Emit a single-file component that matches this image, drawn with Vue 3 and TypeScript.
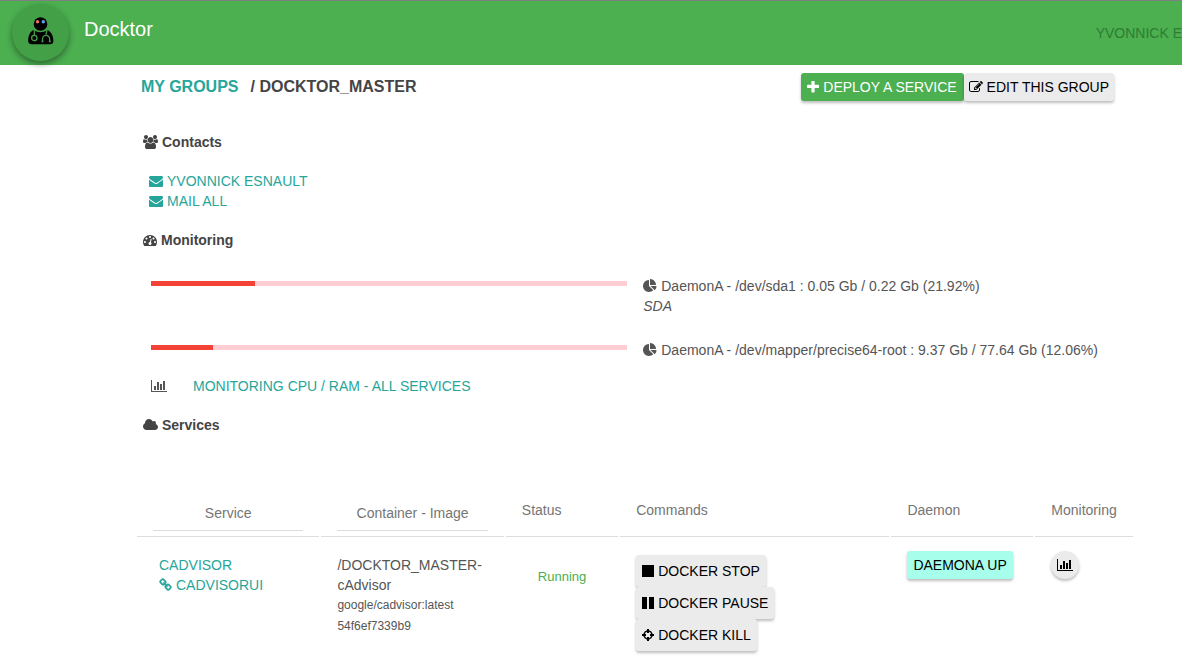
<script setup lang="ts">
interface Icon {
  box: string
  d: string
}

const icons: Record<string, Icon> = {
  plus: {
    box: '192 192 1408 1408',
    d: 'M1600 736v192q0 40-28 68t-68 28h-416v416q0 40-28 68t-68 28h-192q-40 0-68-28t-28-68v-416h-416q-40 0-68-28t-28-68v-192q0-40 28-68t68-28h416v-416q0-40 28-68t68-28h192q40 0 68 28t28 68v416h416q40 0 68 28t28 68z',
  },
  edit: {
    box: '0 0 1792 1792',
    d: 'M888 1184l116-116-152-152-116 116v56h96v96h56zm440-720q-16-16-33 1l-350 350q-17 17-1 33t33-1l350-350q17-17 1-33zm80 594v190q0 119-84.5 203.5t-203.5 84.5h-832q-119 0-203.5-84.5t-84.5-203.5v-832q0-119 84.5-203.5t203.5-84.5h832q63 0 117 25 15 7 18 23 3 17-9 29l-49 49q-14 14-32 8-23-6-45-6h-832q-66 0-113 47t-47 113v832q0 66 47 113t113 47h832q66 0 113-47t47-113v-126q0-13 9-22l64-64q15-15 35-7t20 29zm-96-738l288 288-672 672h-288v-288zm444 132l-92 92-288-288 92-92q28-28 68-28t68 28l152 152q28 28 28 68t-28 68z',
  },
  users: {
    box: '0 0 1920 1792',
    d: 'M593 896q-162 5-265 128h-134q-82 0-138-40.5t-56-118.5q0-353 124-353 6 0 43.5 21t97.5 42.5 119 21.5q67 0 133-23-5 37-5 66 0 139 81 256zm1071 637q0 120-73 189.5t-194 69.5h-874q-121 0-194-69.5t-73-189.5q0-53 3.5-103.5t14-109 26.5-108.5 43-97.5 62-81 85.5-53.5 111.5-20q10 0 43 21.5t73 48 107 48 135 21.5 135-21.5 107-48 73-48 43-21.5q61 0 111.5 20t85.5 53.5 62 81 43 97.5 26.5 108.5 14 109 3.5 103.5zm-1024-1277q0 106-75 181t-181 75-181-75-75-181 75-181 181-75 181 75 75 181zm704 384q0 159-112.5 271.5t-271.5 112.5-271.5-112.5-112.5-271.5 112.5-271.5 271.5-112.5 271.5 112.5 112.5 271.5zm576 225q0 78-56 118.5t-138 40.5h-134q-103-123-265-128 81-117 81-256 0-29-5-66 66 23 133 23 59 0 119-21.5t97.5-42.5 43.5-21q124 0 124 353zm-128-609q0 106-75 181t-181 75-181-75-75-181 75-181 181-75 181 75 75 181z',
  },
  envelope: {
    box: '0 0 1792 1792',
    d: 'M1792 710v794q0 66-47 113t-113 47h-1472q-66 0-113-47t-47-113v-794q44 49 101 87 362 246 497 345 57 42 92.5 65.5t94.5 48 110 24.5h2q51 0 110-24.5t94.5-48 92.5-65.5q170-123 498-345 57-39 100-87zm0-294q0 79-49 151t-122 123q-376 261-468 325-10 7-42.5 31t-54 38.5-52 32.5-57.5 27-50 9h-2q-23 0-50-9t-57.5-27-52-32.5-54-38.5-42.5-31q-91-64-262-182.5t-205-142.5q-62-42-117-115.5t-55-136.5q0-78 41.5-130t118.5-52h1472q65 0 112.5 47t47.5 113z',
  },
  gauge: {
    box: '0 0 1792 1792',
    d: 'M384 1152q0-53-37.5-90.5t-90.5-37.5-90.5 37.5-37.5 90.5 37.5 90.5 90.5 37.5 90.5-37.5 37.5-90.5zm192-448q0-53-37.5-90.5t-90.5-37.5-90.5 37.5-37.5 90.5 37.5 90.5 90.5 37.5 90.5-37.5 37.5-90.5zm428 481l101-382q6-26-7.5-48.5t-38.5-29.5-48 6.5-30 39.5l-101 382q-60 5-107 43.5t-63 98.5q-20 77 20 146t117 89 146-20 89-117q16-60-6-117t-72-91zm660-33q0-53-37.5-90.5t-90.5-37.5-90.5 37.5-37.5 90.5 37.5 90.5 90.5 37.5 90.5-37.5 37.5-90.5zm-640-640q0-53-37.5-90.5t-90.5-37.5-90.5 37.5-37.5 90.5 37.5 90.5 90.5 37.5 90.5-37.5 37.5-90.5zm448 192q0-53-37.5-90.5t-90.5-37.5-90.5 37.5-37.5 90.5 37.5 90.5 90.5 37.5 90.5-37.5 37.5-90.5zm320 448q0 261-141 483-19 29-54 29h-1402q-35 0-54-29-141-221-141-483 0-182 71-348t191-286 286-191 348-71 348 71 286 191 191 286 71 348z',
  },
  pie: {
    box: '0 0 1792 1792',
    d: 'M768 890l546 546q-106 108-247.5 168t-298.5 60q-209 0-385.5-103t-279.5-279.5-103-385.5 103-385.5 279.5-279.5 385.5-103v762zm187 6h773q0 157-60 298.5t-168 247.5zm709-128h-768v-768q209 0 385.5 103t279.5 279.5 103 385.5z',
  },
  chart: {
    box: '0 0 2048 1792',
    d: 'M640 896v512h-256v-512h256zm384-512v1024h-256v-1024h256zm1024 1152v128h-2048v-1536h128v1408h1920zm-640-896v768h-256v-768h256zm384-384v1152h-256v-1152h256z',
  },
  cloud: {
    box: '0 0 1920 1792',
    d: 'M1920 1152q0 159-112.5 271.5t-271.5 112.5h-1088q-185 0-316.5-131.5t-131.5-316.5q0-132 71-241.5t187-163.5q-2-28-2-43 0-212 150-362t362-150q158 0 286.5 88t187.5 230q70-62 166-62 106 0 181 75t75 181q0 75-41 138 129 30 213 134.5t84 239.5z',
  },
  link: {
    box: '0 0 1792 1792',
    d: 'M1520 1216q0-40-28-68l-208-208q-28-28-68-28-42 0-72 32 3 3 19 18.5t21.5 21.5 15 19 13 25.5 3.5 27.5q0 40-28 68t-68 28q-15 0-27.5-3.5t-25.5-13-19-15-21.5-21.5-18.5-19q-33 31-33 73 0 40 28 68l206 207q27 27 68 27 40 0 68-26l147-146q28-28 28-67zm-703-705q0-40-28-68l-206-207q-28-28-68-28-39 0-68 27l-147 146q-28 28-28 67 0 40 28 68l208 208q27 27 68 27 42 0 72-31-3-3-19-18.5t-21.5-21.5-15-19-13-25.5-3.5-27.5q0-40 28-68t68-28q15 0 27.5 3.5t25.5 13 19 15 21.5 21.5 18.5 19q33-31 33-73zm895 705q0 120-85 203l-147 146q-83 83-203 83-121 0-204-85l-206-207q-83-83-83-203 0-123 88-209l-88-88q-86 88-208 88-120 0-204-84l-208-208q-84-84-84-204t85-203l147-146q83-83 203-83 121 0 204 85l206 207q83 83 83 203 0 123-88 209l88 88q86-88 208-88 120 0 204 84l208 208q84 84 84 204z',
  },
  stop: { box: '1 1 12 12', d: 'M1 1h12v12H1z' },
  pause: { box: '1 1 12 12', d: 'M1 1h5v12H1zM8 1h5v12H8z' },
  crosshairs: {
    box: '1 1 12 12',
    d: 'M6 1h2v1.3A5 5 0 0 1 11.7 6H13v2h-1.3A5 5 0 0 1 8 11.7V13H6v-1.3A5 5 0 0 1 2.3 8H1V6h1.3A5 5 0 0 1 6 2.3zM6 3.8A3.5 3.5 0 0 0 3.8 6H5v2H3.8A3.5 3.5 0 0 0 6 10.2V9h2v1.2A3.5 3.5 0 0 0 10.2 8H9V6h1.2A3.5 3.5 0 0 0 8 3.8V5H6z',
  },
}

const contacts = ['YVONNICK ESNAULT', 'MAIL ALL']

const disks = [
  { label: 'DaemonA - /dev/sda1 : 0.05 Gb / 0.22 Gb (21.92%)', note: 'SDA', percent: 21.92 },
  { label: 'DaemonA - /dev/mapper/precise64-root : 9.37 Gb / 77.64 Gb (12.06%)', note: '', percent: 13 },
]

const commands = [
  { icon: 'stop', label: 'DOCKER STOP' },
  { icon: 'pause', label: 'DOCKER PAUSE' },
  { icon: 'crosshairs', label: 'DOCKER KILL' },
]
</script>

<template>
  <div class="page">
    <header class="topbar">
      <a class="logo" href="#" aria-label="Home">
        <svg viewBox="0 0 26 28" class="robot" aria-hidden="true">
          <circle cx="12.5" cy="7" r="6.8" />
          <path d="M5.500 13Q12.500 17.500 19.500 13C23 14.500 25.500 19 25.400 24Q25.200 27.300 22 27.300H3.500Q.4 27.300.2 24C0 19 2 14.500 5.500 13z" />
          <g fill="none" stroke="#43a047" stroke-width="1.3">
            <path d="M6.300 13v5" />
            <circle cx="6.3" cy="21" r="2.700" />
            <path d="M19 13l-1 4.500M14.500 24.500v-2.500a3.600 3.600 0 0 1 7.200 0v2.500M13.500 24.500h2M20.800 24.500h2" />
          </g>
          <circle cx="9.5" cy="4.8" r="1.700" fill="#ef6a6a" />
          <circle cx="15.3" cy="4.8" r="1.700" fill="#5aa5e6" />
        </svg>
      </a>
      <span class="brand">Docktor</span>
      <a class="account" href="#">YVONNICK E</a>
    </header>

    <main class="content">
      <div class="titlebar">
        <h1 class="crumbs"><a href="#">MY GROUPS</a><span>/ DOCKTOR_MASTER</span></h1>
        <div class="actions">
          <button type="button" class="btn primary">
            <svg class="icon slim" :viewBox="icons.plus.box"><path :d="icons.plus.d" /></svg>DEPLOY A SERVICE
          </button>
          <button type="button" class="btn edit">
            <svg class="icon" :viewBox="icons.edit.box"><path :d="icons.edit.d" /></svg>EDIT THIS GROUP
          </button>
        </div>
      </div>

      <section class="contacts">
        <h2><svg class="icon wide" :viewBox="icons.users.box"><path :d="icons.users.d" /></svg>Contacts</h2>
        <ul>
          <li v-for="name in contacts" :key="name">
            <a href="#"><svg class="icon" :viewBox="icons.envelope.box"><path :d="icons.envelope.d" /></svg>{{ name }}</a>
          </li>
        </ul>
      </section>

      <section class="monitoring">
        <h2><svg class="icon" :viewBox="icons.gauge.box"><path :d="icons.gauge.d" /></svg>Monitoring</h2>
        <div v-for="disk in disks" :key="disk.label" class="disk">
          <div class="meter"><div class="fill" :style="{ width: disk.percent + '%' }"></div></div>
          <div class="disk-text">
            <div><svg class="icon" :viewBox="icons.pie.box"><path :d="icons.pie.d" /></svg>{{ disk.label }}</div>
            <em v-if="disk.note">{{ disk.note }}</em>
          </div>
        </div>
        <div class="all">
          <svg class="icon chart" :viewBox="icons.chart.box"><path :d="icons.chart.d" /></svg>
          <a href="#">MONITORING CPU / RAM - ALL SERVICES</a>
        </div>
      </section>

      <section class="services">
        <h2><svg class="icon wide" :viewBox="icons.cloud.box"><path :d="icons.cloud.d" /></svg>Services</h2>
        <table>
          <colgroup>
            <col class="c-name" /><col class="c-name" /><col class="c-status" /><col class="c-commands" /><col class="c-daemon" /><col class="c-monitor" />
          </colgroup>
          <thead>
            <tr>
              <th><input type="text" placeholder="Service" aria-label="Service" /></th>
              <th><input type="text" placeholder="Container - Image" aria-label="Container - Image" /></th>
              <th>Status</th>
              <th>Commands</th>
              <th>Daemon</th>
              <th>Monitoring</th>
            </tr>
          </thead>
          <tbody>
            <tr>
              <td class="name">
                <a href="#">CADVISOR</a>
                <a href="#"><svg class="icon link" :viewBox="icons.link.box"><path :d="icons.link.d" /></svg>CADVISORUI</a>
              </td>
              <td>
                <div>/DOCKTOR_MASTER-<br />cAdvisor</div>
                <div class="small">google/cadvisor:latest</div>
                <div class="small">54f6ef7339b9</div>
              </td>
              <td class="status">Running</td>
              <td>
                <div class="commands">
                  <button v-for="command in commands" :key="command.label" type="button" class="btn tall">
                    <svg class="icon slim" :viewBox="icons[command.icon].box"><path :d="icons[command.icon].d" /></svg>{{ command.label }}
                  </button>
                </div>
              </td>
              <td class="daemon"><button type="button" class="btn up">DAEMONA UP</button></td>
              <td class="daemon">
                <button type="button" class="btn round" aria-label="Monitoring">
                  <svg class="icon chart" :viewBox="icons.chart.box"><path :d="icons.chart.d" /></svg>
                </button>
              </td>
            </tr>
          </tbody>
        </table>
      </section>
    </main>
  </div>
</template>

<style>
body {
  margin: 0;
  background: #fff;
}
</style>

<style scoped>
* {
  box-sizing: border-box;
}
.page {
  font-family: 'Liberation Sans', Arial, sans-serif;
  font-size: 14px;
  line-height: 20px;
  color: #555;
}
a {
  color: #26a69a;
  text-decoration: none;
}
.icon {
  width: 14px;
  height: 14px;
  fill: currentColor;
  flex: none;
  margin-right: 4px;
  vertical-align: -2px;
}
.icon.slim {
  width: 12px;
  height: 12px;
}
.icon.wide {
  width: 15px;
}
.icon.chart {
  width: 16px;
  margin-right: 0;
}
.icon.link {
  width: 13px;
  stroke: currentColor;
  stroke-width: 70px;
}

.topbar {
  display: flex;
  align-items: flex-start;
  height: 65px;
  padding: 3px 0 0 12px;
  border-top: 1px solid #808080;
  background: #4caf50;
  white-space: nowrap;
}
.logo {
  display: flex;
  flex: none;
  align-items: center;
  justify-content: center;
  width: 57px;
  height: 57px;
  padding-bottom: 4px;
  border-radius: 50%;
  background: #43a047;
  box-shadow: 0 3px 6px rgba(0, 0, 0, 0.4);
}
.robot {
  width: 26px;
  height: 28px;
}
.brand {
  flex: 1;
  margin: 11px 0 0 15px;
  font-size: 20px;
  line-height: 28px;
  color: #fff;
}
.account {
  margin-top: 19px;
  color: #2e7d32;
}

.content {
  padding: 8px 47px 8px 135px;
}
.titlebar {
  display: flex;
  justify-content: space-between;
  padding: 0 21px 0 6px;
}
h1,
h2 {
  margin: 0;
  color: #444;
}
.crumbs {
  display: flex;
  gap: 12px;
  font-size: 16px;
  line-height: 28px;
}
.actions {
  display: flex;
}
.btn {
  display: flex;
  align-items: center;
  height: 28px;
  padding: 0 6px;
  border: 0;
  border-radius: 3px;
  background: #ebebeb;
  box-shadow: 0 2px 3px rgba(0, 0, 0, 0.26);
  font: inherit;
  color: #000;
  white-space: nowrap;
}
.btn.primary {
  background: #4caf50;
  color: #fff;
  padding-right: 7px;
}
.btn.edit {
  padding: 0 5px;
}
h2 {
  font-size: 14px;
  line-height: 20px;
  padding-left: 8px;
}

.contacts {
  margin-top: 31px;
}
ul {
  margin: 19px 0 0;
  padding: 0 0 0 14px;
  list-style: none;
}

.monitoring {
  margin-top: 19px;
}
.disk {
  display: flex;
  align-items: flex-start;
  gap: 16px;
  height: 64px;
  padding: 0 0 0 16px;
}
h2 + .disk {
  margin-top: 26px;
}
.disk + .disk {
  height: 36px;
}
.meter {
  flex: 0 0 48.4%;
  height: 5px;
  margin-top: 5px;
  background: #ffcdd2;
}
.fill {
  height: 100%;
  background: #f44336;
}
.disk-text {
  white-space: nowrap;
}
.disk-text em {
  display: block;
}
.all {
  display: flex;
  align-items: center;
  gap: 26px;
  padding-left: 16px;
}

.services {
  margin-top: 19px;
}
table {
  width: 100%;
  margin-top: 49px;
  border-spacing: 2px 0;
  table-layout: fixed;
}
.c-name {
  width: 18.5%;
}
.c-status {
  width: 11.4%;
}
.c-commands {
  width: 27.3%;
}
.c-daemon {
  width: 14.4%;
}
th {
  height: 53px;
  padding: 0 16px;
  border-bottom: 1px solid #ddd;
  text-align: left;
  font-weight: 400;
  color: #757575;
}
th input {
  display: block;
  width: 100%;
  height: 36px;
  margin-top: 6px;
  padding: 0;
  border: 0;
  border-bottom: 1px solid #ddd;
  background: transparent;
  font: inherit;
  text-align: center;
}
th input::placeholder {
  color: #757575;
  opacity: 1;
}
td {
  padding: 18px 16px 0;
  vertical-align: top;
}
.name {
  padding-left: 22px;
}
.name a {
  display: block;
}
.small {
  font-size: 12px;
  line-height: 21px;
}
.status {
  padding: 30px 0 0 32px;
  font-size: 13px;
  color: #4caf50;
}
.commands {
  display: flex;
  flex-direction: column;
  align-items: flex-start;
}
.btn.tall {
  height: 32px;
}
.daemon {
  padding-top: 14px;
}
.btn.up {
  background: #a7ffeb;
}
.btn.round {
  width: 28px;
  justify-content: center;
  padding: 0;
  border-radius: 50%;
}
</style>
